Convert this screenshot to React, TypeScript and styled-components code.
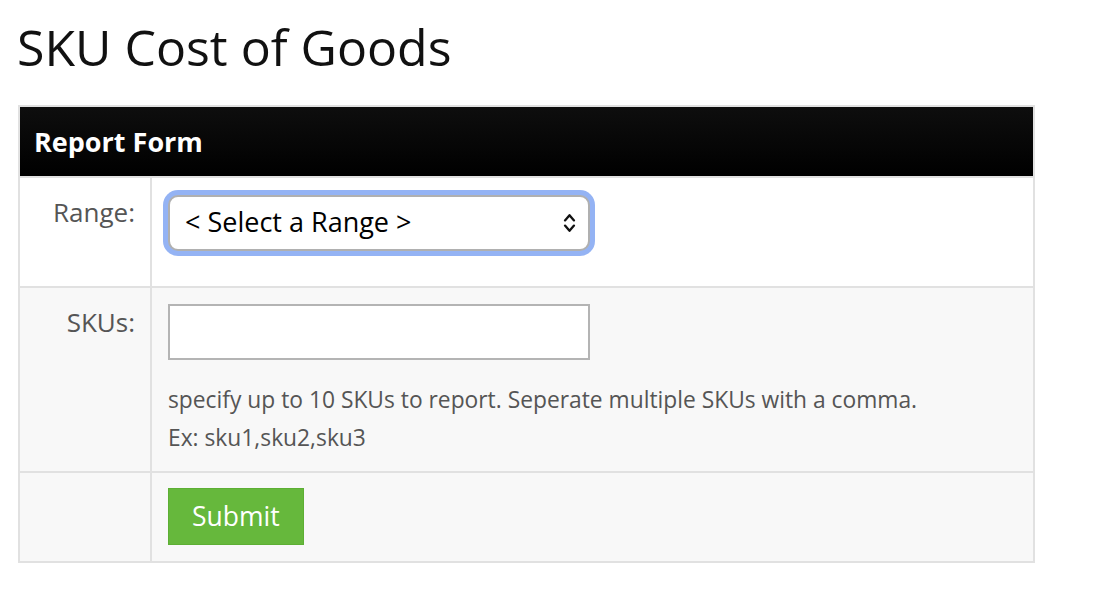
import React from "react";
import styled, { createGlobalStyle } from "styled-components";

const GlobalStyle = createGlobalStyle`
  html, body { margin: 0; padding: 0; background: #ffffff; }
  body { font-family: "Open Sans", "Liberation Sans", Arial, sans-serif; }
  *, *::before, *::after { box-sizing: border-box; }
`;

const Page = styled.main`
  padding: 0 0 0 18px;
`;

const Title = styled.h1`
  margin: 15px 0 26px -1px;
  font-size: 50px;
  line-height: 64px;
  font-weight: 400;
  color: #111111;
`;

const Panel = styled.section`
  width: 1017px;
  border: 2px solid #e1e1e1;
`;

const PanelHeader = styled.h2`
  margin: 0;
  height: 69px;
  padding: 0 14px;
  display: flex;
  align-items: center;
  background: linear-gradient(#0e0e0e, #000000);
  color: #ffffff;
  font-size: 27px;
  font-weight: 700;
`;

const FormRow = styled.div<{ $shade?: boolean }>`
  display: grid;
  grid-template-columns: 132px 1fr;
  border-top: 2px solid #e1e1e1;
  background: ${(p) => (p.$shade ? "#f8f8f8" : "#ffffff")};
`;

const LabelCell = styled.label`
  padding: 16px 15px 16px 0;
  border-right: 2px solid #e1e1e1;
  text-align: right;
  font-size: 26px;
  line-height: 36px;
  color: #555555;
`;

const FieldCell = styled.div<{ $top?: number; $bottom?: number }>`
  padding: ${(p) => p.$top ?? 16}px 16px ${(p) => p.$bottom ?? 16}px 16px;
  display: flex;
  flex-direction: column;
  align-items: flex-start;
`;

const SelectWrap = styled.div`
  position: relative;
  width: 422px;
  margin: 1px 0 19px;
`;

const Select = styled.select`
  appearance: none;
  -webkit-appearance: none;
  width: 100%;
  height: 56px;
  padding: 0 40px 3px 15px;
  border: 2px solid #b0b0b0;
  border-radius: 10px;
  box-shadow: 0 0 0 5px #94b3f4;
  background: #ffffff;
  color: #000000;
  font-family: inherit;
  font-size: 27px;
  outline: none;
`;

const Chevrons = styled.svg`
  position: absolute;
  right: 14px;
  top: 50%;
  transform: translateY(-50%);
  pointer-events: none;
`;

const TextInput = styled.input`
  width: 422px;
  height: 56px;
  margin: 0 0 21px;
  padding: 0 12px;
  border: 2px solid #b4b4b4;
  border-radius: 0;
  background: #ffffff;
  font-family: inherit;
  font-size: 23px;
  outline: none;
`;

const Help = styled.p`
  margin: 0;
  font-size: 22.8px;
  line-height: 38px;
  color: #555555;
`;

const SubmitButton = styled.button`
  height: 57px;
  padding: 0 23px 2px;
  border: 1px solid #5daf34;
  border-radius: 0;
  background: #66b83c;
  color: #ffffff;
  font-family: inherit;
  font-size: 26.5px;
  cursor: pointer;
`;

export default function App() {
  return (
    <Page>
      <GlobalStyle />
      <Title>SKU Cost of Goods</Title>
      <Panel>
        <PanelHeader>Report Form</PanelHeader>
        <FormRow>
          <LabelCell htmlFor="range">Range:</LabelCell>
          <FieldCell>
            <SelectWrap>
              <Select id="range" defaultValue="">
                <option value="">&lt; Select a Range &gt;</option>
              </Select>
              <Chevrons width="13" height="22" viewBox="0 0 13 22" aria-hidden="true">
                <path
                  d="M2 8.4 L6.5 3.2 L11 8.4 M2 13.6 L6.5 18.8 L11 13.6"
                  fill="none"
                  stroke="#111"
                  strokeWidth="2.3"
                  strokeLinecap="round"
                  strokeLinejoin="round"
                />
              </Chevrons>
            </SelectWrap>
          </FieldCell>
        </FormRow>
        <FormRow $shade>
          <LabelCell htmlFor="skus">SKUs:</LabelCell>
          <FieldCell $top={16} $bottom={14}>
            <TextInput id="skus" type="text" />
            <Help>specify up to 10 SKUs to report. Seperate multiple SKUs with a comma.</Help>
            <Help>Ex: sku1,sku2,sku3</Help>
          </FieldCell>
        </FormRow>
        <FormRow $shade>
          <LabelCell as="div" />
          <FieldCell $top={15} $bottom={16}>
            <SubmitButton type="button">Submit</SubmitButton>
          </FieldCell>
        </FormRow>
      </Panel>
    </Page>
  );
}
